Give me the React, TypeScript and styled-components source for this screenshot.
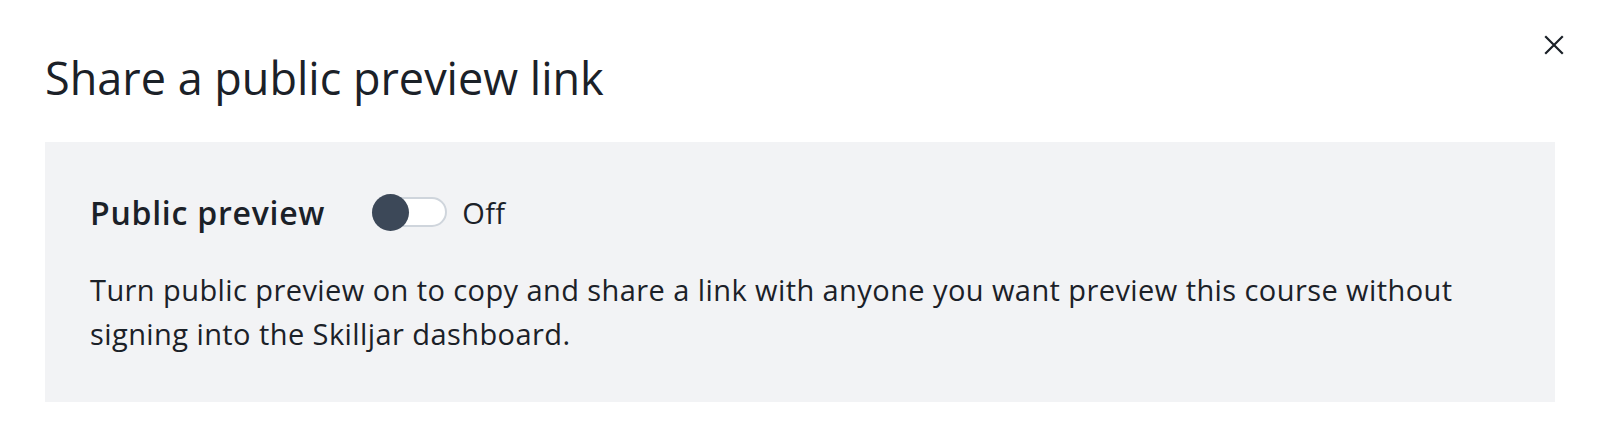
import React, {useState} from "react";
import styled, {createGlobalStyle} from "styled-components";

const GlobalStyle = createGlobalStyle`
  html, body {
    margin: 0;
    padding: 0;
    background: #ffffff;
    font-family: "Open Sans", "Noto Sans", sans-serif;
  }
`;

function CloseIcon() {
    return (
        <svg width="20" height="20" viewBox="0 0 20 20" fill="none">
            <path d="M2 2L18 18M18 2L2 18" stroke="#1b2128" strokeWidth="2.2" strokeLinecap="square"/>
        </svg>
    )
}

function App() {
    const [isPublic, setIsPublic] = useState(false);

    return (
        <>
            <GlobalStyle/>
            <Dialog>
                <CloseButton aria-label="Close">
                    <CloseIcon/>
                </CloseButton>
                <Title>Share a public preview link</Title>
                <Panel>
                    <SettingRow>
                        <Label>Public preview</Label>
                        <Toggle $on={isPublic} onClick={() => setIsPublic(!isPublic)} aria-pressed={isPublic}>
                            <Knob $on={isPublic}/>
                        </Toggle>
                        <State>{isPublic ? "On" : "Off"}</State>
                    </SettingRow>
                    <Description>
                        Turn public preview on to copy and share a link with anyone you want preview this course without
                        signing into the Skilljar dashboard.
                    </Description>
                </Panel>
            </Dialog>
        </>
    )
}

const Dialog = styled.div`
  position: relative;
  padding: 50px 45px 45px 45px;
  color: #1b2128;
`;

const CloseButton = styled.button`
  position: absolute;
  top: 35px;
  right: 36px;
  width: 20px;
  height: 20px;
  padding: 0;
  border: none;
  background: none;
  cursor: pointer;
  display: flex;
`;

const Title = styled.h1`
  margin: 0 0 36px 0;
  font-size: 45px;
  line-height: 56px;
  font-weight: 400;
  color: #1b2128;
`;

const Panel = styled.div`
  background: #f2f3f5;
  padding: 51px 45px 46px 45px;
`;

const SettingRow = styled.div`
  display: flex;
  align-items: center;
  height: 38px;
`;

const Label = styled.span`
  font-size: 32px;
  font-weight: 600;
  letter-spacing: 0.75px;
  color: #1b2128;
  margin-right: 47px;
`;

const Toggle = styled.button<{ $on: boolean }>`
  position: relative;
  width: 75px;
  height: 30px;
  padding: 0;
  border-radius: 15px;
  border: 2px solid #cfd5dc;
  background: ${p => p.$on ? "#3c4858" : "#ffffff"};
  cursor: pointer;
  margin-right: 15px;
`;

const Knob = styled.span<{ $on: boolean }>`
  position: absolute;
  top: -5.5px;
  left: ${p => p.$on ? "36px" : "-2px"};
  width: 37px;
  height: 37px;
  border-radius: 50%;
  background: #3c4858;
`;

const State = styled.span`
  font-size: 29px;
  letter-spacing: 0.42px;
  color: #1b2128;
`;

const Description = styled.p`
  margin: 37px 0 0 0;
  font-size: 29px;
  line-height: 44px;
  letter-spacing: 0.42px;
  color: #1b2128;
`;

export default App
